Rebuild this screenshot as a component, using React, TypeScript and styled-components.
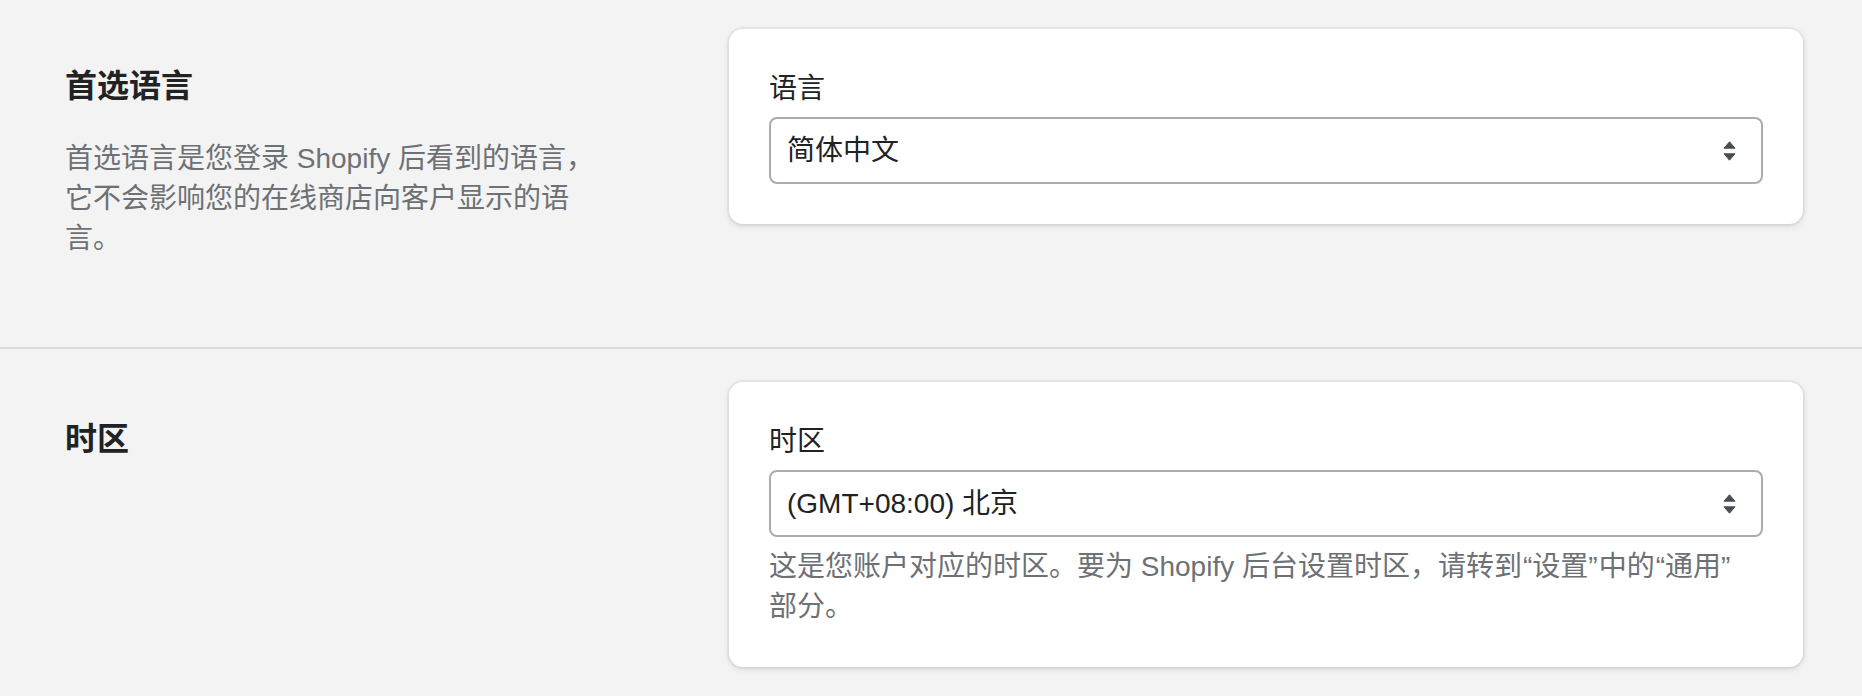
import React from "react";
import styled, { createGlobalStyle } from "styled-components";

const GlobalStyle = createGlobalStyle`
  html, body {
    margin: 0;
    padding: 0;
    overflow: hidden;
    background: #f3f3f3;
  }
  body {
    font-family: "Liberation Sans", "Noto Sans CJK SC", sans-serif;
    color: #202223;
    -webkit-font-smoothing: antialiased;
  }
`;

const Page = styled.main`
  display: flex;
  flex-direction: column;
  background: #f3f3f3;
`;

const Section = styled.section<{ $top: number; $bottom: number; $divider?: boolean }>`
  display: grid;
  grid-template-columns: 545px 1fr;
  column-gap: 119px;
  align-items: start;
  padding: ${(p) => p.$top}px 59px ${(p) => p.$bottom}px 65px;
  border-bottom: ${(p) => (p.$divider ? "2px solid #dadada" : "none")};
`;

const Annotation = styled.div`
  padding-top: 37px;
`;

const Heading = styled.h2`
  margin: 0 0 33px;
  font-size: 32px;
  line-height: 40px;
  font-weight: 600;
  color: #202223;
`;

const Description = styled.p`
  margin: 0;
  font-size: 28px;
  line-height: 40px;
  color: #6d7175;
`;

const Card = styled.div`
  background: #ffffff;
  border-radius: 14px;
  padding: 40px;
  box-shadow: 0 0 0 2px rgba(63, 63, 68, 0.05), 0 2px 6px 0 rgba(63, 63, 68, 0.15);
`;

const Label = styled.label`
  display: block;
  font-size: 28px;
  line-height: 40px;
  color: #202223;
  margin-bottom: 8px;
`;

const SelectBox = styled.div`
  box-sizing: border-box;
  height: 67px;
  display: flex;
  align-items: center;
  justify-content: space-between;
  padding: 0 25px 0 16px;
  background: #ffffff;
  border: 2px solid #acacac;
  border-radius: 8px;
  font-size: 28px;
  line-height: 40px;
  color: #202223;
  cursor: pointer;
`;

const HelpText = styled.p`
  margin: 10px 0 0;
  max-width: 975px;
  font-size: 28px;
  line-height: 40px;
  color: #6d7175;
`;

const Quote = styled.span`
  padding: 0 1px;
`;

const SelectIcon = () => (
  <svg width="13" height="20" viewBox="0 0 13 20" aria-hidden="true">
    <path d="M1 7.2 L6.5 0.8 L12 7.2 Z" fill="#4a4d50" stroke="#4a4d50" strokeWidth="1" strokeLinejoin="round" />
    <path d="M1 12.8 L12 12.8 L6.5 19.2 Z" fill="#4a4d50" stroke="#4a4d50" strokeWidth="1" strokeLinejoin="round" />
  </svg>
);

const Select = ({ value }: { value: string }) => (
  <SelectBox role="combobox" aria-expanded="false">
    <span>{value}</span>
    <SelectIcon />
  </SelectBox>
);

export default function App() {
  return (
    <>
      <GlobalStyle />
      <Page>
        <Section $top={29} $bottom={88} $divider>
          <Annotation>
            <Heading>首选语言</Heading>
            <Description>
              首选语言是您登录 Shopify 后看到的语言，它不会影响您的在线商店向客户显示的语言。
            </Description>
          </Annotation>
          <Card>
            <Label>语言</Label>
            <Select value="简体中文" />
          </Card>
        </Section>
        <Section $top={33} $bottom={30}>
          <Annotation>
            <Heading>时区</Heading>
          </Annotation>
          <Card>
            <Label>时区</Label>
            <Select value="(GMT+08:00) 北京" />
            <HelpText>
              这是您账户对应的时区。要为 Shopify 后台设置时区，请转到<Quote>“设置”</Quote>中的<Quote>“通用”</Quote>
              <wbr />
              部分。
            </HelpText>
          </Card>
        </Section>
      </Page>
    </>
  );
}
